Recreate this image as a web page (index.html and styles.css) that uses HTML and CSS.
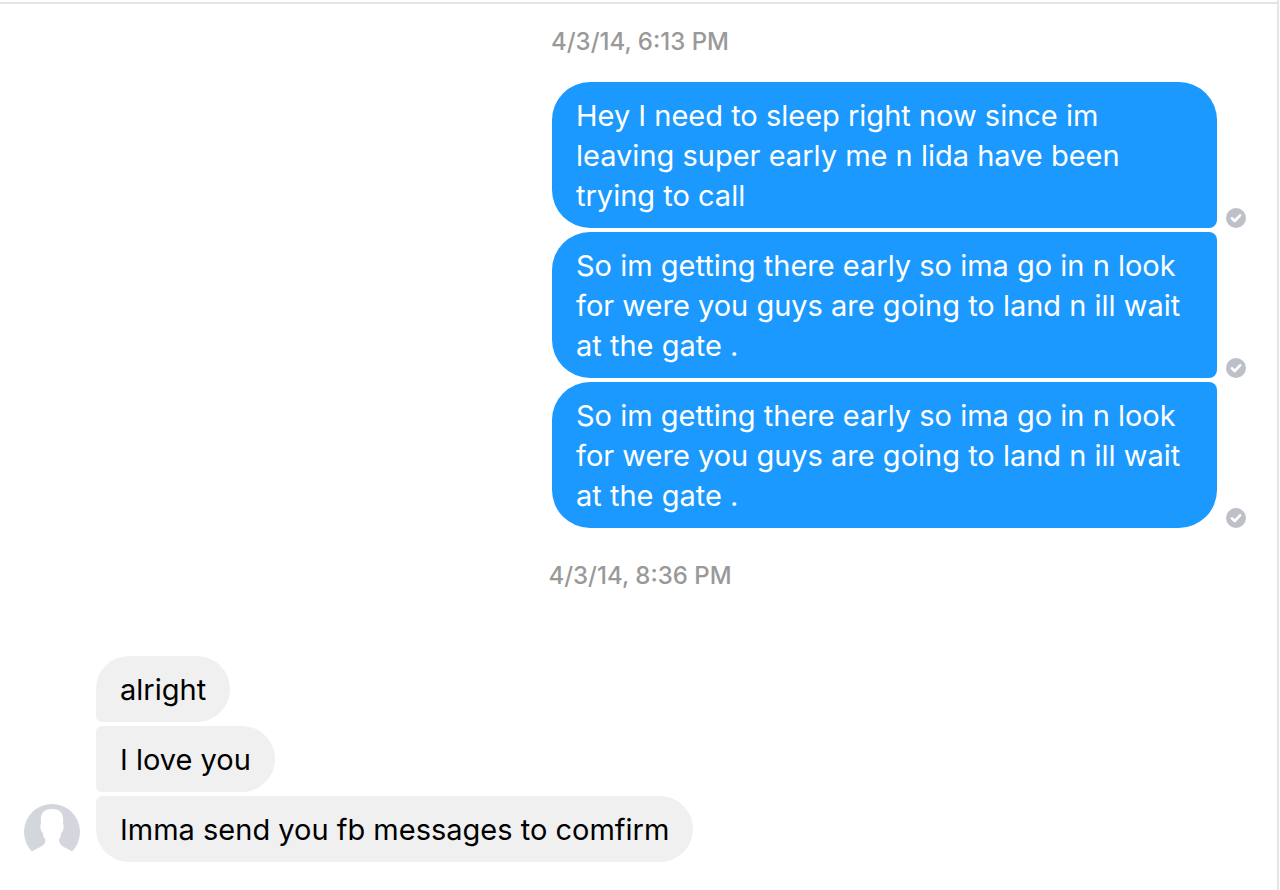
FILE: index.html
```html
<!DOCTYPE html>
<html lang="en">
<head>
<meta charset="utf-8">
<title>Conversation</title>
<link rel="stylesheet" href="styles.css">
</head>
<body>
<div class="page">
<main class="conversation">
  <time class="timestamp" datetime="2014-04-03T18:13">4/3/14, 6:13 PM</time>
  <section class="group sent">
    <div class="row"><p class="bubble">Hey I need to sleep right now since im leaving super early me n lida have been trying to call</p><svg class="status" viewBox="0 0 20 20" role="img" aria-label="Sent"><circle cx="10" cy="10" r="10"/><path d="M5.8 10.3l2.9 2.7 5.4-5.7"/></svg></div>
    <div class="row"><p class="bubble">So im getting there early so ima go in n look for were you guys are going to land n ill wait at the gate .</p><svg class="status" viewBox="0 0 20 20" role="img" aria-label="Sent"><circle cx="10" cy="10" r="10"/><path d="M5.8 10.3l2.9 2.7 5.4-5.7"/></svg></div>
    <div class="row"><p class="bubble">So im getting there early so ima go in n look for were you guys are going to land n ill wait at the gate .</p><svg class="status" viewBox="0 0 20 20" role="img" aria-label="Sent"><circle cx="10" cy="10" r="10"/><path d="M5.8 10.3l2.9 2.7 5.4-5.7"/></svg></div>
  </section>
  <time class="timestamp" datetime="2014-04-03T20:36">4/3/14, 8:36 PM</time>
  <section class="group received">
    <svg class="avatar" viewBox="0 0 56 56" role="img" aria-label="Profile picture"><path class="avatar-bg" d="M7.9 47.5A28 28 0 1 1 48.1 47.5C44.500 45 40 43.500 37.500 41.500Q35 39.500 35 35.500C36.500 33.500 37 31.500 37.400 28.200C39.500 27.500 40.300 22 39 19.800C40 11 37.500 5 28 5S16 11 17 19.800C15.700 22 16.500 27.500 18.600 28.200C19 31.500 19.500 33.500 21.500 35.500Q21.500 39.500 18.500 41.500C16 43.500 11.500 45 7.900 47.500Z"/></svg>
    <div class="messages">
      <p class="bubble">alright</p>
      <p class="bubble">I love you</p>
      <p class="bubble">Imma send you fb messages to comfirm</p>
    </div>
  </section>
</main>
</div>
</body>
</html>
```
FILE: styles.css
```css
* { box-sizing: border-box; }
body { margin: 0; background: #fff; font-family: Inter, "Liberation Sans", sans-serif; }
.page {
  min-height: 100vh;
  margin-right: 1px;
  padding-top: 2px;
  border-right: 2px solid #e5e5e5;
}
.conversation {
  padding: 22px 0 28px;
  border-top: 2px solid #e4e4e4;
}
.timestamp {
  display: block;
  padding-left: 3px;
  text-align: center;
  font-size: 24px;
  line-height: 32px;
  font-weight: 500;
  color: #999;
}
.bubble {
  margin: 0;
  padding: 14px 24px 12px;
  font-size: 29px;
  line-height: 40px;
}
.sent {
  display: flex;
  flex-direction: column;
  gap: 4px;
  padding: 24px 31px 32px;
}
.row { display: flex; justify-content: flex-end; align-items: flex-end; gap: 9px; }
.sent .bubble {
  width: 665px;
  background: #1b99fe;
  color: #fff;
  border-radius: 38px 8px 8px 38px;
}
.sent .row:first-child .bubble { border-top-right-radius: 38px; }
.sent .row:last-child .bubble { border-bottom-right-radius: 38px; }
.status { width: 20px; height: 20px; flex: none; }
.status circle { fill: #bec0c9; }
.status path { fill: none; stroke: #fff; stroke-width: 2.6; stroke-linecap: round; stroke-linejoin: round; }
.received { display: flex; align-items: flex-end; gap: 16px; padding: 64px 24px 0; }
.avatar { width: 56px; height: 56px; flex: none; margin-bottom: 2px; }
.avatar-bg { fill: #d3d6dc; }
.messages { display: flex; flex-direction: column; align-items: flex-start; gap: 4px; }
.messages .bubble { background: #f0f0f0; color: #000; border-radius: 6px 33px 33px 6px; }
.messages .bubble:first-child { border-top-left-radius: 33px; }
.messages .bubble:last-child { border-bottom-left-radius: 33px; }
```
